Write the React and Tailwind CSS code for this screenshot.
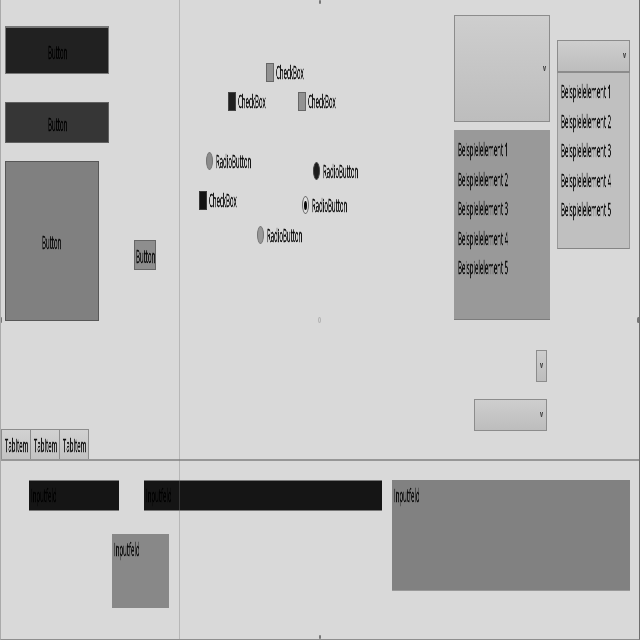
const ITEMS = [1, 2, 3, 4, 5].map((n) => `Beispielelement ${n}`);

// Text squeezed horizontally; the wrapper gives it its drawn width.
function Label({ children, className = "" }) {
  return (
    <span className={`block h-5 whitespace-nowrap ${className}`}>
      <span className="inline-block origin-left scale-x-[0.336] will-change-transform [-webkit-text-stroke:0.4px_currentColor]">{children}</span>
    </span>
  );
}

function Button({ className }) {
  return (
    <button className={`flex items-center justify-center border ${className}`}>
      <Label className="w-[19px]">Button</Label>
    </button>
  );
}

function Check({ className = "", box = "bg-[#929292] border-[#666]" }) {
  return (
    <label className={`flex h-5 shrink-0 items-center ${className}`}>
      <span className={`h-[19px] w-2 border ${box}`} />
      <Label className="ml-0.5 w-7">CheckBox</Label>
    </label>
  );
}

function Radio({ className = "", box = "bg-[#8c8c8c] border-[#737373]", dot = false }) {
  return (
    <label className={`flex h-5 shrink-0 items-center ${className}`}>
      <span className={`flex h-[18px] w-[7px] items-center justify-center rounded-[50%] border ${box}`}>
        {dot && <span className="h-[9px] w-[3px] rounded-[50%] bg-[#080808]" />}
      </span>
      <Label className="ml-[3px] w-9">RadioButton</Label>
    </label>
  );
}

function Combo({ className = "" }) {
  return (
    <div className={`flex items-center justify-end border border-[#8c8c8c] bg-linear-to-b from-[#cecece] to-[#bdbdbd] pr-[3px] ${className}`}>
      <svg className="h-[6px] w-[3px]" viewBox="0 0 3 6" fill="none" stroke="#444" strokeWidth="1">
        <path d="M.4 0 1.5 5 2.6 0" />
      </svg>
    </div>
  );
}

function List({ className }) {
  return (
    <ul className={className}>
      {ITEMS.map((t) => (
        <li key={t} className="h-[29.5px]">
          <Label className="w-[50px]">{t}</Label>
        </li>
      ))}
    </ul>
  );
}

function Input({ className }) {
  return (
    <div className={`overflow-hidden pl-[1.5px] ${className}`}>
      <Label className="w-[26px]">Inputfeld</Label>
    </div>
  );
}

function Tab() {
  return (
    <div className="w-[29px] border-t border-r border-[#8c8c8c] bg-linear-to-b from-[#d2d2d2] to-[#c2c2c2] pt-[5px] pl-[3px]">
      <Label className="w-[22px]">TabItem</Label>
    </div>
  );
}

export default function App() {
  return (
    <main className="relative flex h-[640px] w-[640px] flex-col overflow-hidden border-r border-b border-l border-r-[#6e6e6e] border-b-[#8e8e8e] border-l-[#aaa] bg-[#d9d9d9] font-['Open_Sans','Noto_Sans',sans-serif] text-[18px] leading-5 text-[#0c0c0c]">
      <section className="flex h-[461px] shrink-0 border-b-2 border-[#969696]">
        <div className="flex w-[179px] shrink-0 flex-col">
          <Button className="mt-[26px] ml-1 h-12 w-[104px] border-t-2 border-[#777] bg-[#212121] pt-0.5 text-black" />
          <Button className="mt-7 ml-1 h-[41px] w-[104px] border-[#606060] bg-[#363636] pt-0.5 text-black" />
          <div className="mt-[18px] ml-1 flex">
            <Button className="h-40 w-[94px] border-[#575757] bg-[#808080] pt-0.5 pr-0.5" />
            <Button className="mt-[79px] ml-[35px] h-[30px] w-[22px] border-[#666] bg-[#8e8e8e] pt-0.5" />
          </div>
          <div className="mt-auto flex h-[30px] border-l border-[#8c8c8c]">
            <Tab />
            <Tab />
            <Tab />
          </div>
        </div>

        <div className="w-[274px] shrink-0">
          <Check className="mt-[62px] ml-[86px]" />
          <div className="mt-[9px] ml-12 flex">
            <Check box="bg-[#202020] border-[#444]" />
            <Check className="ml-8" />
          </div>
          <div className="mt-10 ml-[26px] flex">
            <Radio />
            <Radio className="mt-2.5 ml-[61px]" box="bg-[#1c1c1c] border-[#444]" />
          </div>
          <div className="mt-[9px] ml-[19px] flex">
            <Check box="bg-[#131313] border-[#383838]" />
            <Radio className="mt-[5px] ml-[65px]" box="bg-[#e0e0e0] border-[#666]" dot />
          </div>
          <Radio className="mt-[10px] ml-[77px]" box="bg-[#999] border-[#737373]" />
        </div>

        <div className="flex w-[96px] shrink-0 flex-col items-end pt-[15px]">
          <Combo className="h-[107px] w-24" />
          <List className="mt-2 h-[190px] w-24 border-b border-[#7c7c7c] bg-[#999] pt-[9px] pl-1" />
          <Combo className="mt-[30px] mr-[3px] h-8 w-[11px]" />
          <Combo className="mt-[17px] mr-[3px] h-8 w-[73px]" />
        </div>

        <div className="ml-[7px] w-[73px] shrink-0 pt-10">
          <Combo className="h-[33px] w-[73px] border-b-2" />
          <List className="h-44 border border-t-0 border-[#999] border-b-[#858585] bg-[#c0c0c0] pt-[8px] pl-[3px]" />
        </div>
      </section>

      <section className="flex grow pt-[19px]">
        <div className="w-[381px] shrink-0">
          <div className="ml-7 flex">
            <Input className="h-[31px] w-[90px] border-y border-[#777] bg-[#151515] pt-1 text-black" />
            <Input className="ml-[25px] h-[31px] w-[238px] border-y border-[#777] bg-[#151515] pt-1 text-black" />
          </div>
          <Input className="mt-[23px] ml-[111px] h-[74px] w-[57px] bg-[#888] pt-[5px]" />
        </div>
        <Input className="ml-2.5 h-[111px] w-[238px] border-b border-[#999] bg-[#818181] pt-[5px]" />
      </section>

      {/* Guide line and resize handles over the canvas */}
      <div className="absolute inset-y-0 left-[178px] w-px bg-[#777]/35" />
      <div className="absolute top-0 left-[318px] h-[4px] w-[2px] rounded-full bg-[#777]" />
      <div className="absolute top-[317px] left-[317px] h-[6px] w-[3px] rounded-[50%] border border-[#b4b4b4]" />
      <div className="absolute bottom-0 left-[318px] h-[4px] w-[2px] rounded-full bg-[#777]" />
      <div className="absolute top-[317px] left-[-1px] h-[6px] w-[2px] rounded-full bg-[#777]" />
      <div className="absolute top-[317px] right-[-1px] h-[6px] w-[3px] rounded-full bg-[#777]" />
    </main>
  );
}
